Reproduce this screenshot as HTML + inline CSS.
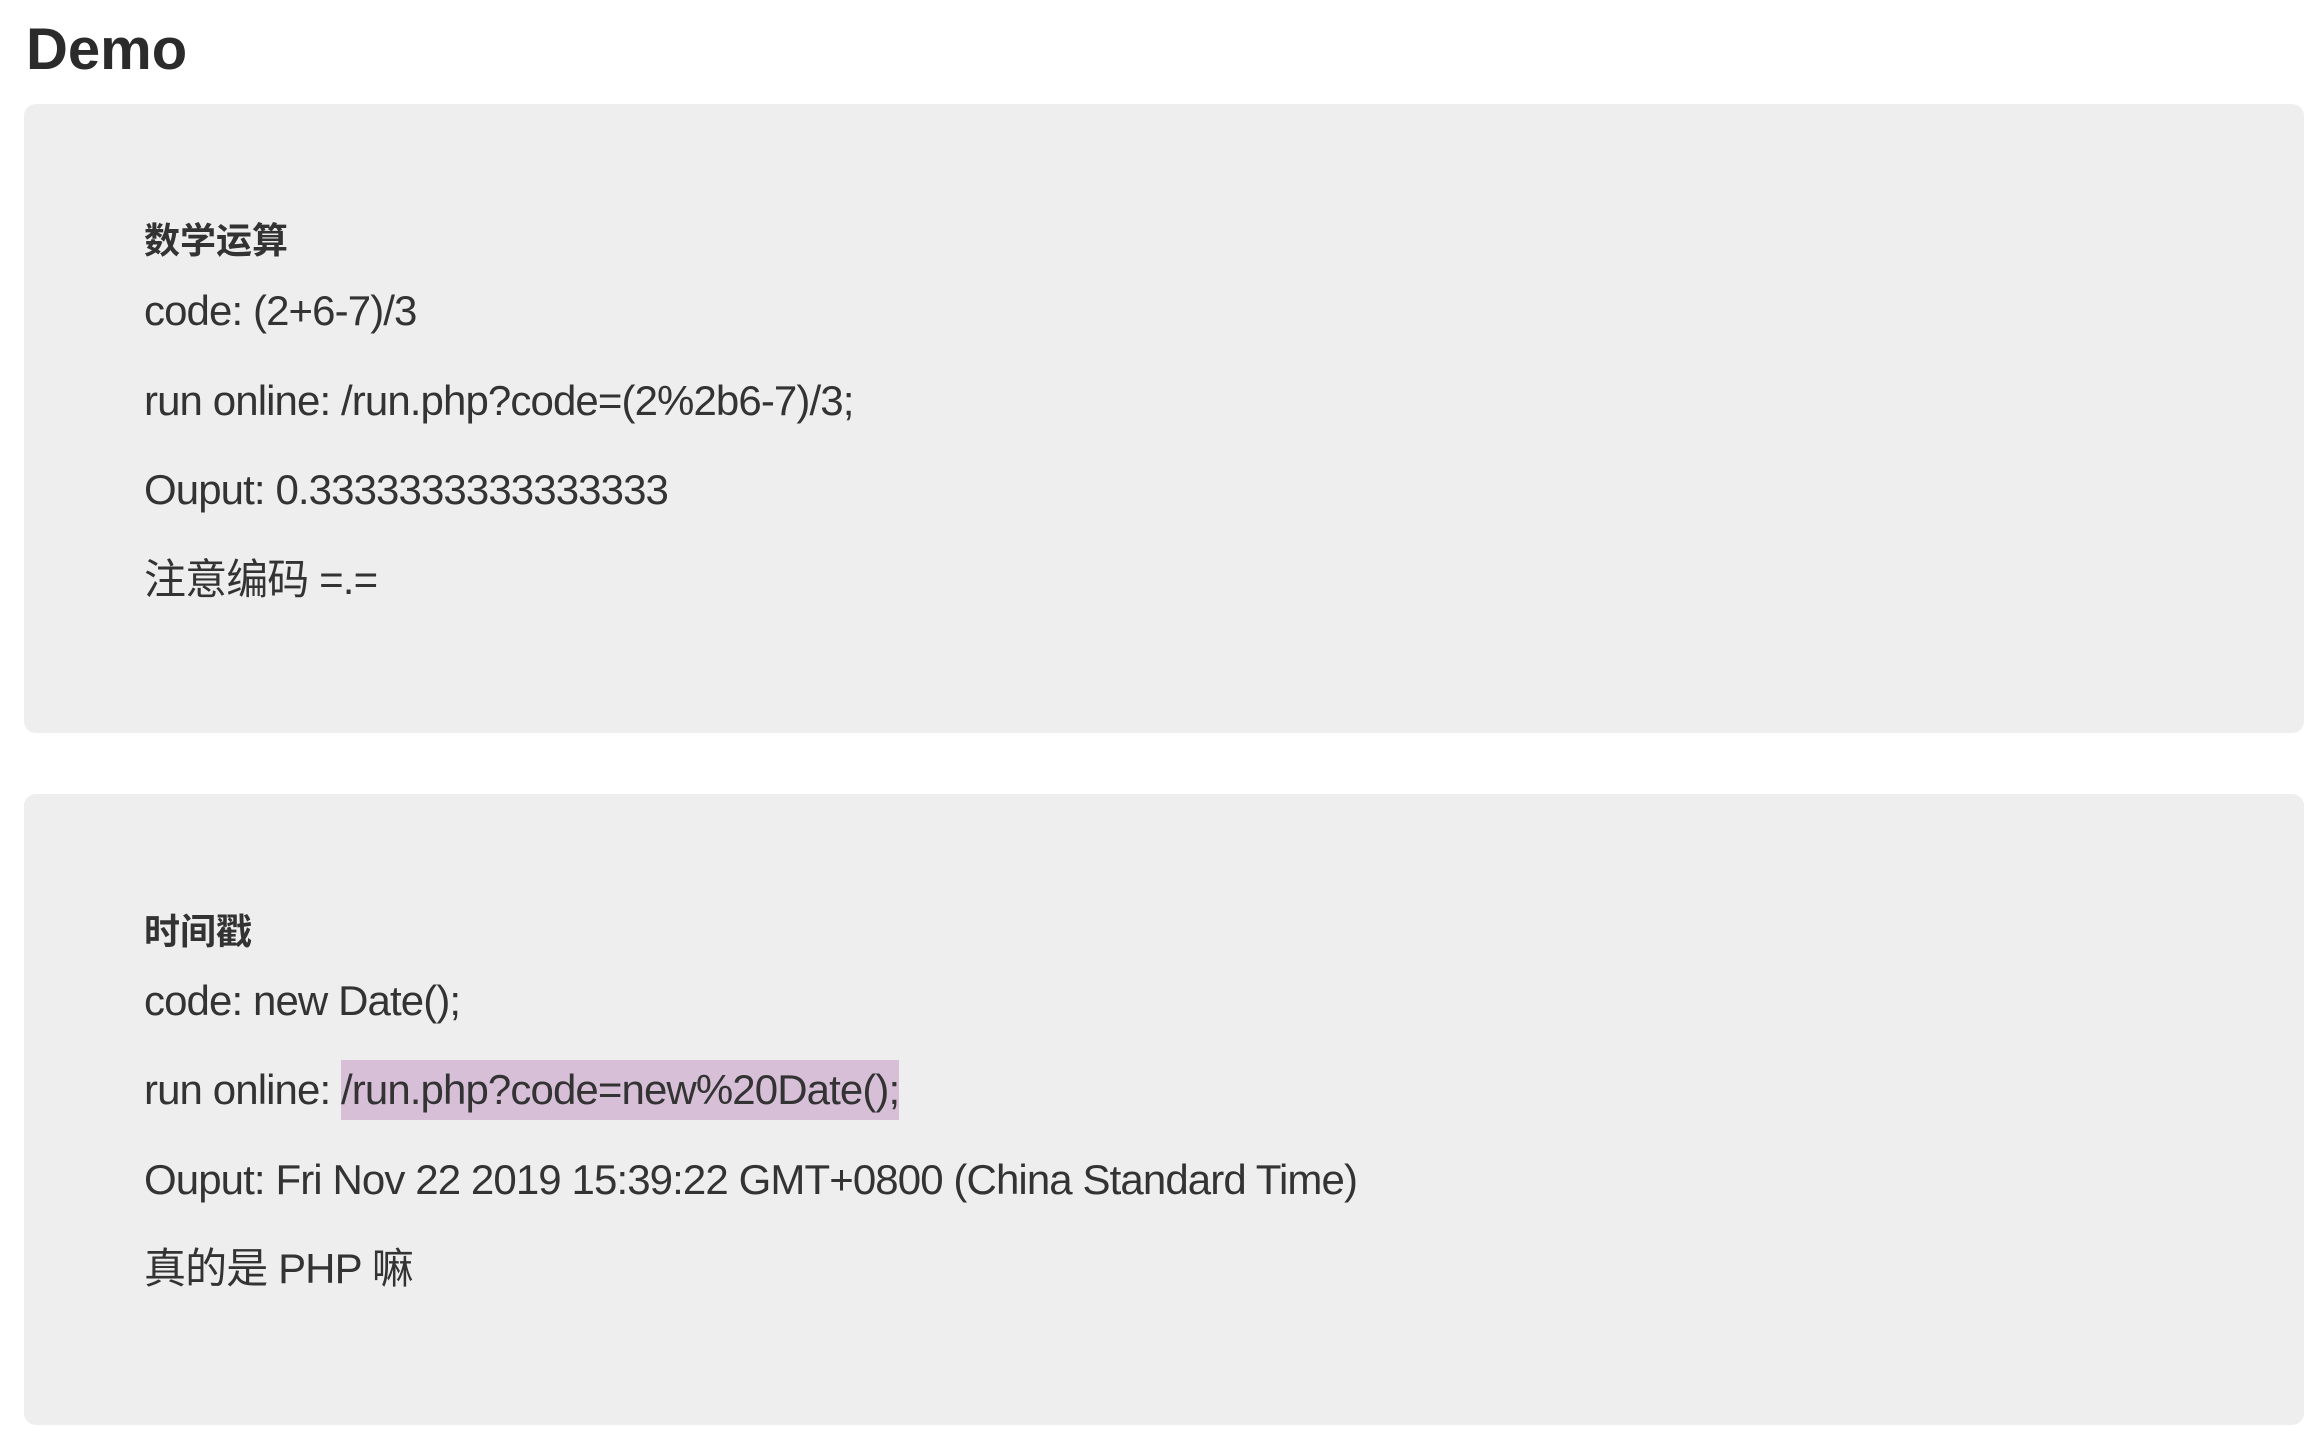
<!DOCTYPE html>
<html><head><meta charset="utf-8"><style>
html,body{margin:0;padding:0;background:#fff;width:2322px;height:1444px;overflow:hidden;}
body{position:relative;font-family:"Liberation Sans","Noto Sans CJK SC",sans-serif;color:#333;}
h1{position:absolute;left:26px;top:10px;margin:0;font-size:58px;font-weight:bold;line-height:80px;color:#2b2b2b;}
.box{position:absolute;left:24px;width:2280px;background:#eeeeee;border-radius:12px;}
.l{position:absolute;left:144px;font-size:42px;line-height:90px;height:90px;white-space:nowrap;color:#333;letter-spacing:-0.9px;}
.h{font-weight:bold;font-size:36px;color:#333;letter-spacing:0;}
.hl{background:#d7bfd8;display:inline-block;line-height:60px;}
</style></head><body>
<h1>Demo</h1>
<div class="box" style="top:104px;height:629px;"></div>
<div class="box" style="top:794px;height:631px;"></div>
<div class="l h" style="top:196px;">数学运算</div>
<div class="l" style="top:266px;">code: (2+6-7)/3</div>
<div class="l" style="top:356px;">run online: /run.php?code=(2%2b6-7)/3;</div>
<div class="l" style="top:445px;">Ouput: 0.3333333333333333</div>
<div class="l" style="top:535px;">注意编码 =.=</div>
<div class="l h" style="top:887px;">时间戳</div>
<div class="l" style="top:956px;">code: new Date();</div>
<div class="l" style="top:1045px;">run online: <span class="hl">/run.php?code=new%20Date();</span></div>
<div class="l" style="top:1135px;">Ouput: Fri Nov 22 2019 15:39:22 GMT+0800 (China Standard Time)</div>
<div class="l" style="top:1224px;">真的是 PHP 嘛</div>
</body></html>
